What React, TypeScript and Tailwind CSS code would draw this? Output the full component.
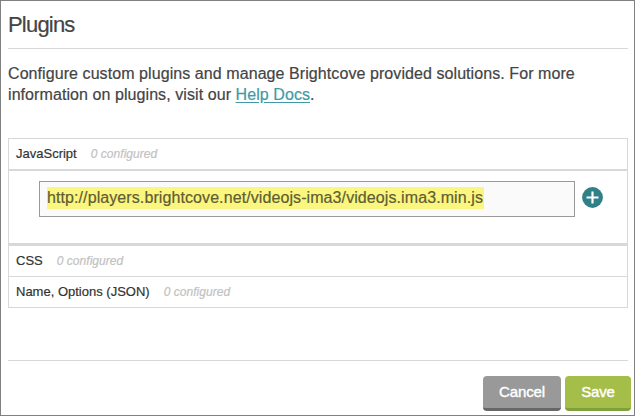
import React from "react";

type RowProps = { label: string; count: number; className?: string };

function SectionRow({ label, count, className = "" }: RowProps) {
  return (
    <div className={`flex items-center gap-[14px] pl-[7px] text-[13px] leading-[30px] ${className}`}>
      <span className="text-[#333333]">{label}</span>
      <span className="text-[12px] tracking-[0.04px] text-[#c2c2c2] italic">{count} configured</span>
    </div>
  );
}

export default function App() {
  return (
    <main className="flex h-[416px] w-[635px] flex-col border border-[#808080] bg-white pl-[7px] font-['Liberation_Sans',Arial,sans-serif] text-[#444444] [-webkit-text-stroke:0.2px]">
      <h1 className="h-[48px] w-[620px] border-b border-[#d8d8d8] pt-[10px] text-[22px] leading-[27px] tracking-[-0.8px] whitespace-nowrap">
        Plugins
      </h1>
      <p className="mt-[14px] h-[42px] text-[16px] leading-[21px] tracking-[0.075px] whitespace-nowrap">
        <span>Configure custom plugins and manage Brightcove provided solutions. For more</span>
        <br />
        <span>information on plugins, visit our </span>
        <a href="#" className="text-[#3f9aa5] underline underline-offset-2">Help Docs</a>.
      </p>
      <section className="mt-[33px] h-[170px] w-[620px] border border-[#d8d8d8]">
        <SectionRow label="JavaScript" count={0} className="h-[30px]" />
        <div className="flex h-[77px] items-start gap-[7px] border-t-2 border-b-[3px] border-[#d8d8d8] pt-[10px] pl-[30px]">
          <div className="flex h-[36px] w-[536px] items-start border border-[#999999] bg-[#fafafa] pt-[5px] pl-[7px]">
            <span className="h-[22px] w-[437px] bg-[#faf680] text-[16px] leading-[21px] tracking-[0.09px] whitespace-nowrap text-[#5f5d33]">
              http://players.brightcove.net/videojs-ima3/videojs.ima3.min.js
            </span>
          </div>
          <button type="button" aria-label="Add" className="mt-[6px]">
            <svg width="21" height="21" viewBox="0 0 21 21" className="block">
              <circle cx="10.5" cy="10.5" r="10.4" fill="#317f87" />
              <path d="M10.5 4.5v12M4.5 10.5h12" stroke="#fff" strokeWidth="2.2" />
            </svg>
          </button>
        </div>
        <SectionRow label="CSS" count={0} className="h-[31px] border-b border-[#d8d8d8]" />
        <SectionRow label="Name, Options (JSON)" count={0} className="h-[30px]" />
      </section>
      <footer className="mt-[52px] w-[620px] border-t border-[#d8d8d8]">
        <div className="flex w-[623px] justify-end gap-[4px] pt-[15px] text-[15px] tracking-[-0.15px] text-white [-webkit-text-stroke:0.4px]">
          <button type="button" className="h-[35px] w-[78px] rounded-[4px] border-b-[3px] border-[#676767] bg-[#999999]">Cancel</button>
          <button type="button" className="h-[35px] w-[66px] rounded-[4px] border-b-[3px] border-[#7fa03c] bg-[#a5be49]">Save</button>
        </div>
      </footer>
    </main>
  );
}
